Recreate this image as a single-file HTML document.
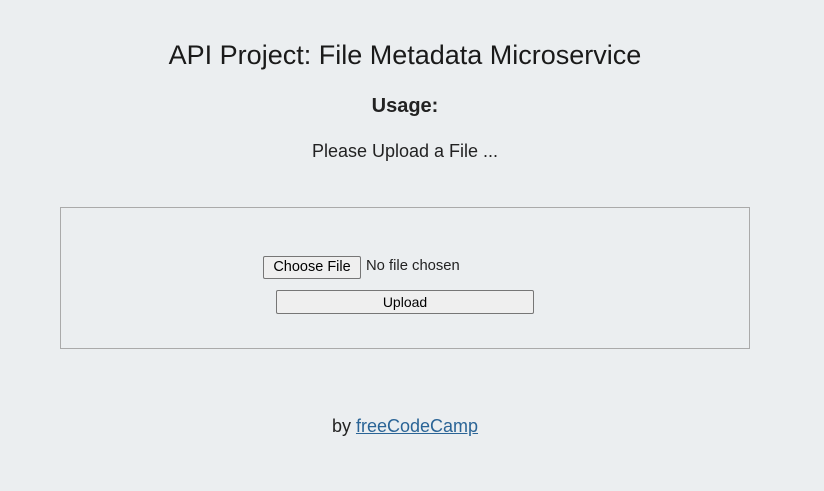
<!DOCTYPE html>
<html><head><style>
body{margin:0;width:824px;height:491px;background:#ebeef0;font-family:"Liberation Sans",sans-serif;color:#222;position:relative;overflow:hidden}
.t{position:absolute;left:0;width:810px;text-align:center}
h1{font-size:27px;font-weight:normal;margin:0;top:40px;color:#1a1a1a}
h3{font-size:20px;font-weight:bold;margin:0;top:95px}
.box{position:absolute;left:60px;top:207px;width:688px;height:140px;border:1px solid #aaa}
.btn{position:absolute;background:#efefef;border:1px solid #767676;border-radius:2px;font-size:14px;color:#000;text-align:center;box-sizing:border-box}
a{color:#2a6496}
</style></head><body>
<h1 class="t">API Project: File Metadata Microservice</h1>
<h3 class="t">Usage:</h3>
<div class="t" style="top:141px;font-size:18px">Please Upload a File ...</div>
<div class="box"></div>
<div class="btn" style="left:263px;top:256px;width:98px;height:23px;line-height:21px;font-size:14.5px">Choose File</div>
<div style="position:absolute;left:366px;top:258px;font-size:14.8px;color:#222">No file chosen</div>
<div class="btn" style="left:276px;top:290px;width:258px;height:24px;line-height:22px">Upload</div>
<div class="t" style="top:416px;font-size:18px">by <a href="#">freeCodeCamp</a></div>
</body></html>
